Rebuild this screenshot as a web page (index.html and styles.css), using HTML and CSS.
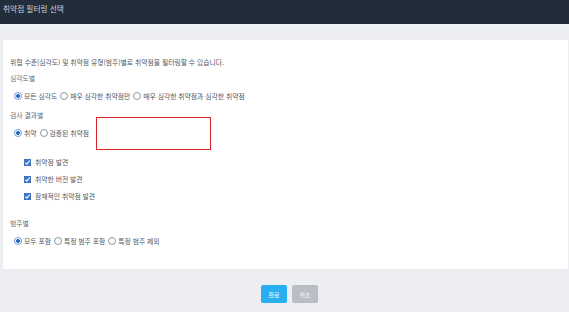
FILE: index.html
```html
<!DOCTYPE html>
<html lang="ko">
<head>
<meta charset="utf-8">
<title>취약점 필터링 선택</title>
<link rel="stylesheet" href="styles.css">
</head>
<body>
<header class="titlebar">취약점 필터링 선택</header>
<div class="strip"></div>
<main class="panel">
  <p class="intro">위협 수준(심각도) 및 취약점 유형(범주)별로 취약점을 필터링할 수 있습니다.</p>

  <section class="group">
    <div class="group-label">심각도별</div>
    <div class="options">
      <label class="opt"><span class="radio checked"></span>모든 심각도</label>
      <label class="opt"><span class="radio"></span>매우 심각한 취약점만</label>
      <label class="opt"><span class="radio"></span>매우 심각한 취약점과 심각한 취약점</label>
    </div>
  </section>

  <section class="group">
    <div class="group-label">검사 결과별</div>
    <div class="options">
      <label class="opt"><span class="radio checked"></span>취약</label>
      <label class="opt"><span class="radio"></span>검증된 취약점</label>
    </div>
    <ul class="checks">
      <li class="check"><svg class="cb" viewBox="0 0 8 8"><rect x="0.4" y="0.4" width="7.2" height="7.2" fill="#3a78cc" stroke="#2a62b4" stroke-width="0.8"/><path d="M1.6 4.1 L3.3 5.9 L6.6 1.7" fill="none" stroke="#fff" stroke-width="1.3"/></svg>취약점 발견</li>
      <li class="check"><svg class="cb" viewBox="0 0 8 8"><rect x="0.4" y="0.4" width="7.2" height="7.2" fill="#3a78cc" stroke="#2a62b4" stroke-width="0.8"/><path d="M1.6 4.1 L3.3 5.9 L6.6 1.7" fill="none" stroke="#fff" stroke-width="1.3"/></svg>취약한 버전 발견</li>
      <li class="check"><svg class="cb" viewBox="0 0 8 8"><rect x="0.4" y="0.4" width="7.2" height="7.2" fill="#3a78cc" stroke="#2a62b4" stroke-width="0.8"/><path d="M1.6 4.1 L3.3 5.9 L6.6 1.7" fill="none" stroke="#fff" stroke-width="1.3"/></svg>잠재적인 취약점 발견</li>
    </ul>
  </section>

  <section class="group last">
    <div class="group-label">범주별</div>
    <div class="options">
      <label class="opt"><span class="radio checked"></span>모두 포함</label>
      <label class="opt"><span class="radio"></span>특정 범주 포함</label>
      <label class="opt"><span class="radio"></span>특정 범주 제외</label>
    </div>
  </section>

  <div class="highlight"></div>
</main>
<footer class="actions">
  <button class="btn primary">완료</button>
  <button class="btn secondary">취소</button>
</footer>
</body>
</html>
```
FILE: styles.css
```css
html, body {
  margin: 0;
  padding: 0;
}
body {
  background: #eceef2;
  font-family: "Noto Sans CJK KR", "Noto Sans", sans-serif;
  color: #50565e;
  width: 569px;
  height: 312px;
  overflow: hidden;
}
.titlebar {
  height: 24px;
  box-sizing: border-box;
  background: #222d3b;
  color: #cdd2d8;
  font-size: 7.7px;
  line-height: 12px;
  padding: 3px 0 0 3px;
}
.strip {
  height: 4px;
  background: #eef1f8;
  margin-bottom: 12px;
}
.panel {
  position: relative;
  display: block;
  background: #fff;
  margin: 0 1px 0 3px;
  height: 229px;
  box-sizing: border-box;
  padding: 16px 7px 0 7px;
  font-size: 6.8px;
  line-height: 12px;
}
.intro {
  margin: 0 0 4px 0;
}
.group {
  display: flex;
  flex-direction: column;
  gap: 6px;
  margin-bottom: 7px;
}
.group-label {
  color: #666c74;
}
.options {
  display: flex;
  align-items: center;
  padding-left: 4px;
  gap: 3px;
}
.opt {
  display: flex;
  align-items: center;
  gap: 2px;
}
.radio {
  display: inline-block;
  width: 6px;
  height: 6px;
  border: 1px solid #8d96a0;
  border-radius: 50%;
  background: #fff;
}
.radio.checked {
  border-color: #6e9bd4;
  background: radial-gradient(circle, #1f6cc8 0 1.6px, #fff 2.2px);
}
.checks {
  list-style: none;
  margin: 11px 0 0 0;
  padding: 0 0 0 14px;
  display: flex;
  flex-direction: column;
  gap: 5px;
}
.check {
  display: flex;
  align-items: center;
  gap: 4px;
}
.cb {
  width: 7px;
  height: 7px;
}
.group:nth-of-type(2) {
  margin-bottom: 15px;
}
.highlight {
  position: absolute;
  left: 93px;
  top: 77px;
  width: 115px;
  height: 33px;
  box-sizing: border-box;
  border: 1.5px solid #d8232b;
}
.actions {
  display: flex;
  justify-content: center;
  gap: 5px;
  padding: 16px 0 0 10px;
}
.btn {
  width: 26px;
  height: 18px;
  border: none;
  border-radius: 2px;
  color: #fff;
  font-family: "Noto Sans CJK KR", "Noto Sans", sans-serif;
  font-size: 6px;
  padding: 0;
}
.primary {
  background: #29aef0;
}
.secondary {
  background: #b7bec6;
}
```
